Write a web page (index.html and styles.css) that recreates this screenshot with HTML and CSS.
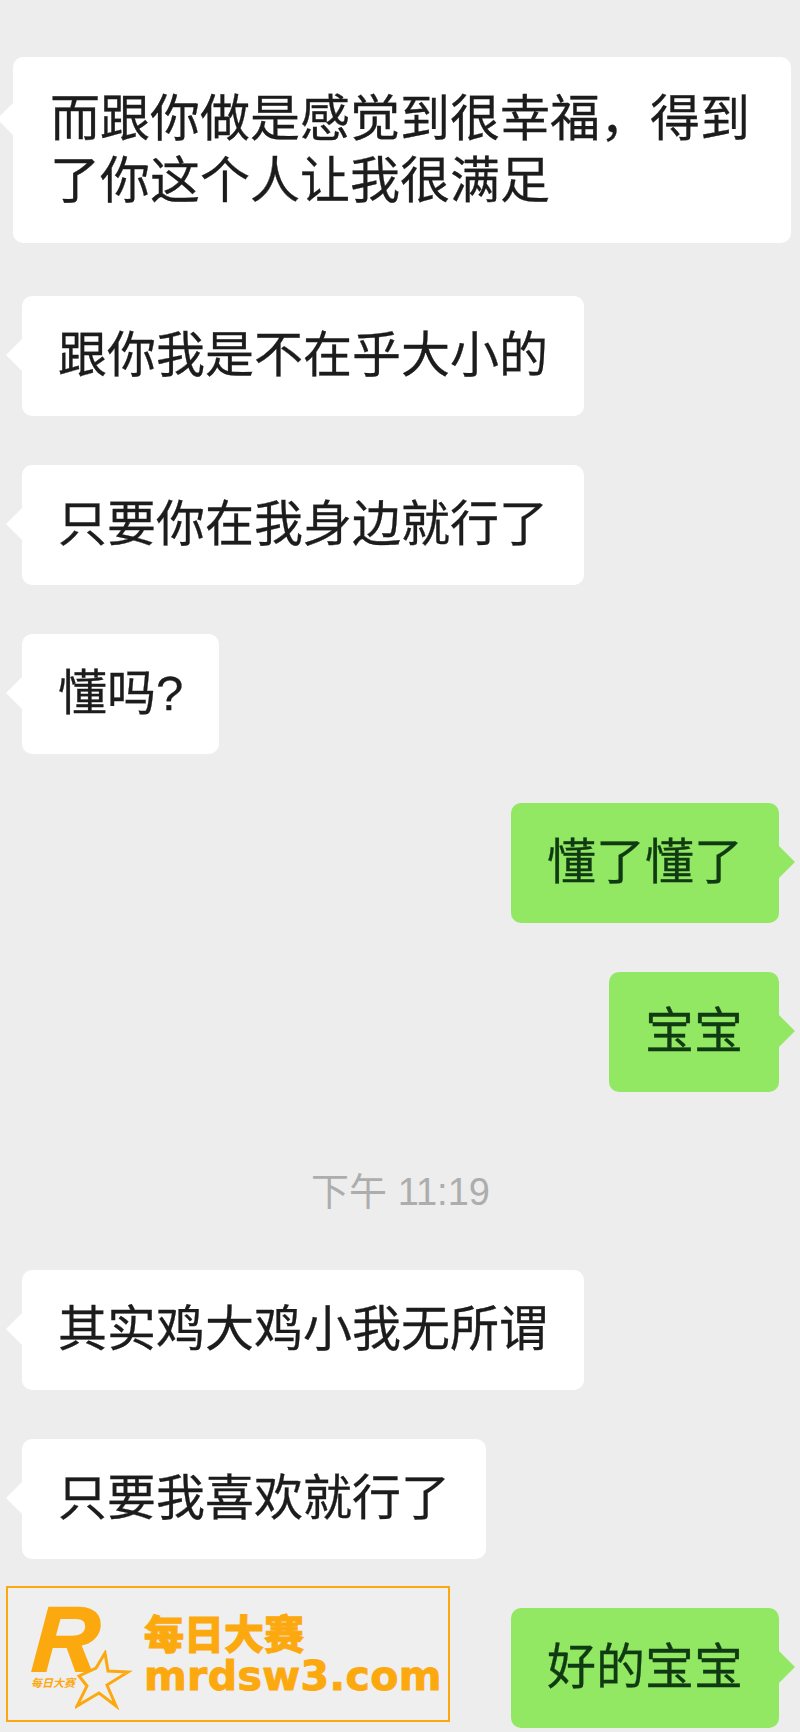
FILE: index.html
```html
<!DOCTYPE html>
<html lang="zh-CN">
<head>
    <meta charset="UTF-8">
    <title>聊天记录</title>
    <link rel="stylesheet" href="styles.css">
</head>
<body>
    <div class="chat">
        <div class="bubble left first">而跟你做是感觉到很幸福，得到<br>了你这个人让我很满足</div>
        <div class="bubble left">跟你我是不在乎大小的</div>
        <div class="bubble left">只要你在我身边就行了</div>
        <div class="bubble left">懂吗?</div>
        <div class="bubble right">懂了懂了</div>
        <div class="bubble right">宝宝</div>
        <div class="time">下午 11:19</div>
        <div class="bubble left">其实鸡大鸡小我无所谓</div>
        <div class="bubble left">只要我喜欢就行了</div>
        <div class="bubble right">好的宝宝</div>
    </div>

    <div class="watermark">
        <div class="logo">
            <span class="logo-r">R</span>
            <svg class="logo-star" viewBox="0 0 60 60">
                <polygon points="30,3 33,21 53,22 32,35 41,56 24,43 2,56 12,36 4,26 21,18" fill="#efefef" stroke="#fca90f" stroke-width="3"/>
            </svg>
            <span class="logo-small">每日大赛</span>
        </div>
        <div class="brand">
            <div class="brand-cn">每日大赛</div>
            <div class="brand-url">mrdsw3.com</div>
        </div>
    </div>
</body>
</html>
```

FILE: styles.css
```css
/* Chat screenshot */
html, body {
    margin: 0;
    padding: 0;
}
body {
    width: 800px;
    height: 1732px;
    position: relative;
    overflow: hidden;
    background-color: #ededed;
    font-family: "Liberation Sans", "Noto Sans CJK SC", sans-serif;
    color: #1c1c1c;
}
.chat {
    display: flex;
    flex-direction: column;
    align-items: flex-start;
    gap: 49px;
    padding: 57px 21px 0 22px;
}
.bubble {
    position: relative;
    padding: 28px 36px 30px;
    font-size: 49px;
    line-height: 62px;
    background-color: #fff;
    border-radius: 10px;
    white-space: nowrap;
    -webkit-text-stroke: 0.3px currentColor;
}
.bubble::after {
    content: "";
    position: absolute;
    top: 47px;
    width: 24px;
    height: 24px;
    background-color: inherit;
    transform: rotate(45deg);
}
.left::after {
    left: -11px;
}
.right {
    align-self: flex-end;
    background-color: #92e763;
    color: #0f3a12;
}
.right::after {
    right: -11px;
}
.first {
    margin-left: -9px;
    margin-bottom: 4px;
    padding: 31px 41px 31px 37px;
    font-size: 50px;
}
.first::after {
    top: 50px;
}
.time {
    align-self: center;
    padding-top: 22px;
    font-size: 38px;
    line-height: 58px;
    color: #adadad;
}
.watermark {
    position: absolute;
    left: 6px;
    top: 1586px;
    width: 444px;
    height: 136px;
    box-sizing: border-box;
    border: 2px solid #fca90f;
    background-color: #efefef;
    color: #fca90f;
    display: flex;
    align-items: center;
    gap: 14px;
}
.logo {
    position: relative;
    flex: none;
    width: 122px;
    height: 130px;
}
.logo-r {
    position: absolute;
    left: 25px;
    top: 16px;
    font-weight: 700;
    font-style: italic;
    font-size: 92px;
    line-height: 68px;
    -webkit-text-stroke: 2px #fca90f;
    transform: skewX(-4deg);
}
.logo-small {
    position: absolute;
    left: 23px;
    top: 87px;
    font-size: 11px;
    line-height: 14px;
    font-weight: 700;
    font-style: italic;
}
.logo-star {
    position: absolute;
    left: 67px;
    top: 61px;
    width: 60px;
    height: 60px;
}
.brand {
    display: flex;
    flex-direction: column;
    gap: 2px;
    margin-top: -2px;
}
.brand-cn {
    font-family: "Noto Sans CJK SC", sans-serif;
    font-size: 40px;
    line-height: 44px;
    font-weight: 900;
    -webkit-text-stroke: 1px #fca90f;
}
.brand-url {
    font-family: "DejaVu Sans", sans-serif;
    font-size: 41px;
    line-height: 40px;
    font-weight: 700;
    letter-spacing: 0.4px;
    -webkit-text-stroke: 1px #fca90f;
}
```
